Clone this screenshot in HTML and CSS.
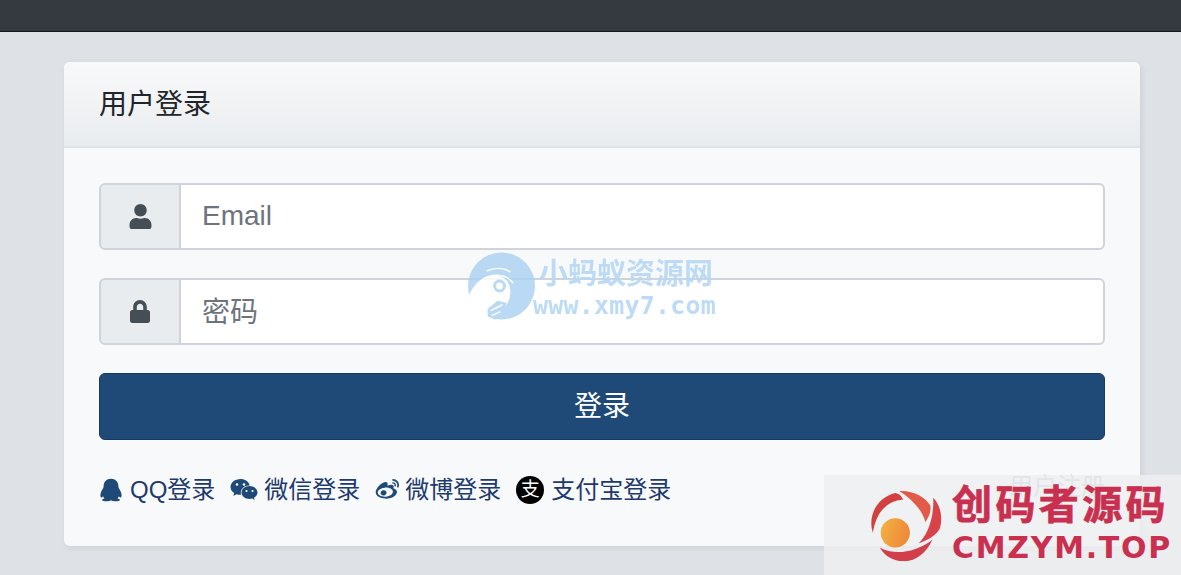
FILE: index.html
```html
<!DOCTYPE html>
<html lang="zh-CN">
<head>
    <meta charset="UTF-8">
    <meta name="viewport" content="width=device-width, initial-scale=1.0">
    <title>用户登录</title>
    <link rel="stylesheet" href="styles.css">
</head>
<body>
    <div class="topbar"></div>

    <div class="page">
        <div class="card">
            <div class="card-header">用户登录</div>
            <div class="card-body">
                <div class="input-group">
                    <span class="addon">
                        <svg class="addon-icon" viewBox="0 0 448 512"><path d="M224 256c70.7 0 128-57.3 128-128S294.7 0 224 0 96 57.3 96 128s57.3 128 128 128zm89.6 32h-16.7c-22.2 10.2-46.9 16-72.9 16s-50.6-5.8-72.9-16h-16.7C60.2 288 0 348.2 0 422.4V464c0 26.5 21.5 48 48 48h352c26.5 0 48-21.5 48-48v-41.6c0-74.2-60.2-134.4-134.4-134.4z"/></svg>
                    </span>
                    <input class="field field-email" type="text" placeholder="Email">
                </div>
                <div class="input-group">
                    <span class="addon">
                        <svg class="addon-icon lock" viewBox="0 0 448 512"><path d="M400 224h-24v-72C376 68.2 307.8 0 224 0S72 68.2 72 152v72H48c-26.5 0-48 21.5-48 48v192c0 26.5 21.5 48 48 48h352c26.5 0 48-21.5 48-48V272c0-26.5-21.5-48-48-48zm-104 0H152v-72c0-39.7 32.3-72 72-72s72 32.3 72 72v72z"/></svg>
                    </span>
                    <input class="field field-password" type="password" placeholder="密码">
                </div>
                <button class="submit-btn">登录</button>

                <div class="links">
                    <a class="social">
                        <svg class="social-icon qq" viewBox="0 0 24 24"><path d="M12 .8c-4.600 0-7.400 3.400-7.400 7.400 0 .9-.2 1.300-.7 2.300C2.600 12.800 1.500 15 1.400 17c-.1 1.500.5 2.600 1 2.600.6 0 1.200-.5 1.700-1.300.3.900.8 1.600 1.400 2.100-1.100.3-2.400.8-2.400 1.500 0 1 2.300 1.300 4.400 1.300 1.900 0 3.500-.3 4.500-1 1 .7 2.600 1 4.500 1 2.100 0 4.400-.3 4.400-1.300 0-.7-1.300-1.200-2.400-1.500.6-.5 1.100-1.200 1.400-2.100.5.800 1.100 1.300 1.700 1.300.5 0 1.100-1.100 1-2.600-.1-2-1.200-4.200-2.500-6.500-.5-1-.7-1.400-.7-2.300C19.400 4.200 16.600.8 12 .8z"/></svg>
                        QQ登录
                    </a>
                    <a class="social">
                        <svg class="social-icon wechat" viewBox="0 0 28 24"><path d="M10.500 2C4.900 2 .5 5.600.5 10c0 2.500 1.400 4.600 3.700 6.100l-.9 2.800 3.200-1.700c1.200.3 2.400.6 3.700.6h.9c-.2-.7-.3-1.400-.3-2.100 0-4 3.500-7.300 8.100-7.300h.8C18.800 4.700 15 2 10.500 2z"/><path d="M27.500 15.500c0-3.600-3.600-6.500-8-6.500s-8 2.900-8 6.500 3.600 6.500 8 6.500c.9 0 1.900-.1 2.700-.4l2.500 1.400-.7-2.300c2.100-1.200 3.500-3 3.500-5.200z"/><g class="eyes"><circle cx="7" cy="7.500" r="1.300"/><circle cx="14" cy="7.500" r="1.300"/><circle cx="16.500" cy="14" r="1.100"/><circle cx="22.500" cy="14" r="1.100"/></g></svg>
                        微信登录
                    </a>
                    <a class="social">
                        <svg class="social-icon weibo" viewBox="0 0 28 24"><path fill-rule="evenodd" d="M11.500 22.500C6 22.500.8 19.900.8 15.600c0-2.400 1.500-5 4-7.500 3.400-3.400 7.300-4.900 8.800-3.400.7.700.7 1.800.3 3.100-.2.600.6.300.6.300 2.800-1.200 5.200-1.200 6.100 0 .5.700.4 1.600 0 2.700-.2.500.1.600.5.700 1.700.5 3.500 1.800 3.500 3.900 0 3.500-5 7.500-12.600 7.500zM11 10.500c-4.700.4-8.200 3-7.900 5.800.3 2.800 4.300 4.700 9 4.300 4.700-.4 8.200-3 7.900-5.800-.3-2.800-4.300-4.700-9-4.300zm-2.900 3.200c-1.600.7-2.200 2.500-1.500 3.900.8 1.500 2.800 2.100 4.400 1.400 1.600-.7 2.400-2.400 1.700-3.900-.8-1.500-2.900-2.100-4.600-1.400z"/><circle cx="9.500" cy="16.700" r="1.200"/><path d="M20 .9a6.800 6.800 0 0 1 6.700 8.400 1 1 0 1 1-1.900-.5A4.900 4.900 0 0 0 20 2.800a1 1 0 0 1 0-1.900zm.2 3.400a3.500 3.500 0 0 1 3.200 4.300.8.800 0 1 1-1.600-.4 1.900 1.900 0 0 0-1.700-2.300.8.800 0 0 1 .1-1.600z"/></svg>
                        微博登录
                    </a>
                    <a class="social">
                        <span class="alipay-icon">支</span>
                        支付宝登录
                    </a>
                    <a class="register">用户注册</a>
                </div>
            </div>
        </div>
    </div>

    <!-- 水印 -->
    <div class="mark-center">
        <svg class="mark-center-logo" viewBox="0 0 70 70">
            <circle cx="35" cy="35" r="34" fill="#a9d0f3"/>
            <path d="M2 44C8 32 16 24 28 24c10 0 16 7 16 17 0 9-5 16-11 21l-8 7C14 66 5 56 2 44z" fill="#fff"/>
            <circle cx="33" cy="35" r="5" fill="none" stroke="#a9d0f3" stroke-width="3"/>
            <path d="M20 20c7-4 17-4 24 1M16 29c7-6 22-8 31 3" fill="none" stroke="#fff" stroke-width="1.500"/>
            <path d="M21 58l10-8 9 2-3 12-8 5-8-3z" fill="#a9d0f3"/>
            <path d="M24 60l12-6M25 65l9-4" fill="none" stroke="#fff" stroke-width="1.500"/>
        </svg>
        <div class="mark-center-text">
            <div class="mark-center-name">小蚂蚁资源网</div>
            <div class="mark-center-url">www.xmy7.com</div>
        </div>
    </div>

    <div class="mark-corner">
        <svg class="mark-corner-logo" viewBox="0 0 74 74">
            <defs>
                <linearGradient id="dot-fill" x1="0" y1="0" x2="1" y2="0.3">
                    <stop offset="0" stop-color="#f3b441"/>
                    <stop offset="1" stop-color="#ee8a3a"/>
                </linearGradient>
            </defs>
            <path d="M3 43C-3 25 8 6 26 2c5 1 7 4 8 7-3 0-9 1-14 4C10 19 5 30 3 43z" fill="#d2403f"/>
            <path d="M30 0C44-1 57 6 62 15c1 7-2 12-5 17C54 20 44 9 30 0z" fill="#e25b48"/>
            <path d="M65 7c7 7 10 19 7 31-4 8-12 12-22 16 8-8 16-24 15-47z" fill="#d8434a"/>
            <path d="M10 58c14 8 36 6 54-8-6 14-18 23-30 22-10 0-19-5-24-14z" fill="#d13f4a"/>
            <circle cx="26" cy="43" r="15" fill="url(#dot-fill)"/>
        </svg>
        <div class="mark-corner-text">
            <div class="mark-corner-name">创码者源码</div>
            <div class="mark-corner-url">CMZYM.TOP</div>
        </div>
    </div>
</body>
</html>
```
FILE: styles.css
```css
:root {
    --primary-color: #1f4a78;
    --link-color: #1c3a6e;
    --border-color: #ced4da;
}
* {
    margin: 0;
    padding: 0;
    box-sizing: border-box;
}
html, body {
    height: 575px;
    overflow: hidden;
}
body {
    position: relative;
    background: #dee2e6;
    color: #212529;
    font-family: "Liberation Sans", "Noto Sans CJK SC", sans-serif;
}
.topbar {
    height: 32px;
    background: #343a40;
    border-bottom: 1px solid #14171a;
}
.page {
    padding: 30px 41px 0 64px;
}
.card {
    background: #f8f9fa;
    border-radius: 6px;
    box-shadow: 2px 2px 6px rgba(0, 0, 0, 0.08);
}
.card-header {
    height: 86px;
    padding-left: 35px;
    font-size: 28px;
    line-height: 85px;
    background: linear-gradient(#f8f9fa, #e9ecef);
    border-bottom: 2px solid #dfe3e7;
    border-radius: 6px 6px 0 0;
}
.card-body {
    padding: 35px 35px 0;
    height: 398px;
}
.input-group {
    display: flex;
    height: 67px;
    margin-bottom: 28px;
}
.addon {
    display: flex;
    align-items: center;
    justify-content: center;
    width: 82px;
    background: #e9ecef;
    border: 2px solid var(--border-color);
    border-radius: 6px 0 0 6px;
}
.addon-icon {
    width: 23px;
    height: 25px;
    fill: #454d55;
}
.addon-icon.lock {
    width: 20px;
    height: 23px;
}
.field {
    flex: 1;
    min-width: 0;
    padding: 0 21px;
    font-family: inherit;
    font-size: 28px;
    color: #495057;
    background: #fff;
    border: 2px solid var(--border-color);
    border-left: none;
    border-radius: 0 6px 6px 0;
    outline: none;
}
.field-email {
    padding-bottom: 2px;
}
.field-password {
    padding-top: 2px;
}
.field::placeholder {
    color: #6c757d;
    opacity: 1;
}
.submit-btn {
    display: block;
    width: 100%;
    height: 67px;
    padding-bottom: 5px;
    font-family: inherit;
    font-size: 28px;
    color: #fff;
    background: var(--primary-color);
    border: 1px solid #173a60;
    border-radius: 6px;
}
.links {
    display: flex;
    align-items: center;
    gap: 15px;
    margin-top: 30px;
    height: 34px;
    font-size: 24px;
    color: var(--link-color);
}
.social {
    display: flex;
    align-items: center;
    gap: 6px;
}
.social-icon {
    height: 24px;
    margin-top: 5px;
    fill: var(--primary-color);
}
.social-icon.qq {
    width: 24px;
    margin-right: 1px;
}
.social-icon.wechat {
    width: 28px;
    margin-top: 3px;
}
.social-icon.weibo {
    width: 25px;
    margin-top: 3px;
    margin-right: -1px;
}
.social-icon .eyes {
    fill: #f8f9fa;
}
.alipay-icon {
    width: 28px;
    height: 28px;
    margin-top: 6px;
    margin-right: 1px;
    font-size: 19px;
    line-height: 27px;
    text-align: center;
    color: #fff;
    background: #000;
    border-radius: 50%;
}
.register {
    margin-left: auto;
    margin-top: -6px;
    color: #adb5bd;
}
.mark-center {
    position: absolute;
    left: 467px;
    top: 251px;
    display: flex;
    gap: 3px;
    pointer-events: none;
    filter: blur(0.4px);
}
.mark-center-logo {
    width: 69px;
    height: 70px;
    opacity: 0.8;
}
.mark-center-text {
    color: #b6d8f6;
    font-weight: bold;
    opacity: 0.9;
}
.mark-center-name {
    margin-top: 1px;
    font-size: 29px;
    line-height: 44px;
}
.mark-center-url {
    margin: -3px 0 0 -6px;
    font-family: "DejaVu Sans Mono", monospace;
    font-size: 25px;
    line-height: 26px;
    letter-spacing: 0.2px;
}
.mark-corner {
    position: absolute;
    left: 824px;
    top: 475px;
    width: 357px;
    height: 100px;
    display: flex;
    gap: 10px;
    padding: 15px 0 0 46px;
    background: rgba(238, 239, 240, 0.82);
    pointer-events: none;
}
.mark-corner-logo {
    width: 72px;
    height: 74px;
}
.mark-corner-text {
    color: #c9304f;
    font-weight: bold;
}
.mark-corner-name {
    margin-top: -5px;
    font-size: 40px;
    line-height: 40px;
    letter-spacing: 3.4px;
    -webkit-text-stroke: 0.7px #c9304f;
}
.mark-corner-url {
    margin-top: 5px;
    font-family: "DejaVu Sans", sans-serif;
    font-size: 30px;
    line-height: 36px;
    letter-spacing: 1.7px;
    white-space: nowrap;
}
```
